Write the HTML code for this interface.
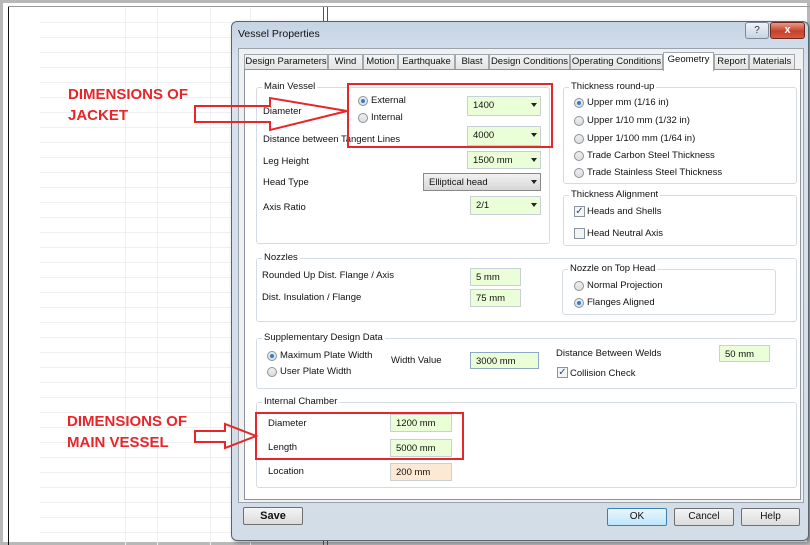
<!DOCTYPE html>
<html><head><meta charset="utf-8"><style>
*{box-sizing:border-box;margin:0;padding:0}
body{width:810px;height:545px;overflow:hidden;background:#fff;font-family:"Liberation Sans",sans-serif;font-size:9.5px;color:#111;position:relative}
.a{position:absolute}
.grp{position:absolute;border:1px solid #d5dbe3;border-radius:3px}
.gl{position:absolute;background:#fff;padding:0 2px;left:5px;top:-7px;white-space:nowrap}
.pan .gl{background:#fff}
.fld{position:absolute;background:#eaffd8;border:1px solid #c9cfd6;height:18px;padding:3px 5px;font-size:9.5px}
.arr{position:absolute;right:3px;top:6px;width:0;height:0;border-left:3.5px solid transparent;border-right:3.5px solid transparent;border-top:4px solid #222}
.rad{position:absolute;width:10px;height:10px;border-radius:50%;border:1px solid #8a949e;background:linear-gradient(#eee,#ddd)}
.rad.on::after{content:"";position:absolute;left:2px;top:2px;width:4px;height:4px;border-radius:50%;background:#2c7fd0}
.chk{position:absolute;width:11px;height:11px;border:1px solid #8a949e;background:#f4f4f4;font-size:10px;line-height:9px;text-align:center;color:#2a4a8a}
.btn{position:absolute;height:18px;border:1px solid #707070;border-radius:2px;background:linear-gradient(#f4f4f4,#dcdcdc);text-align:center;font-size:10px;line-height:16px}
.tab{position:absolute;top:54px;height:16px;border:1px solid #a0a8b2;border-bottom:none;background:linear-gradient(#f4f4f4,#e2e2e2);font-size:9.5px;line-height:14px;text-align:center}
.red{color:#e8262a;font-weight:bold;font-size:15px;position:absolute;white-space:nowrap}
</style></head><body>
<!-- spreadsheet background -->
<div class="a" style="left:0;top:0;width:810px;height:545px;border:3px solid #b8b8b8"></div>
<div class="a" style="left:8px;top:6px;width:1px;height:539px;background:#111"></div>
<div class="a" style="left:8px;top:6px;width:802px;height:1px;background:#999"></div>
<div class="a" style="left:40px;top:8px;width:290px;height:537px;background:repeating-linear-gradient(to bottom,transparent 0,transparent 14px,#eef0f2 14px,#eef0f2 15px)"></div>
<div class="a" style="left:125px;top:8px;width:1px;height:537px;background:#f0f0f0"></div>
<div class="a" style="left:157px;top:8px;width:1px;height:537px;background:#f0f0f0"></div>
<div class="a" style="left:210px;top:8px;width:1px;height:537px;background:#f0f0f0"></div>
<div class="a" style="left:250px;top:8px;width:1px;height:537px;background:#f0f0f0"></div>
<div class="a" style="left:323px;top:7px;width:1px;height:538px;background:#555"></div>
<div class="a" style="left:327px;top:7px;width:1px;height:538px;background:#555"></div>

<!-- dialog -->
<div class="a" style="left:231px;top:21px;width:578px;height:520px;background:linear-gradient(#c5d3e3,#d8e2ee 40px,#d3dde8);border:1px solid #5a6470;border-radius:6px;box-shadow:2px 2px 4px rgba(0,0,0,.35)"></div>
<div class="a" style="left:238px;top:28px;font-size:10.5px">Vessel Properties</div>
<div class="a" style="left:745px;top:22px;width:24px;height:17px;border:1px solid #7a8898;border-radius:3px;background:linear-gradient(#eef3f8,#c8d4e2);font-size:10px;text-align:center;line-height:15px;color:#334">?</div>
<div class="a" style="left:770px;top:22px;width:35px;height:17px;border:1px solid #6a2a20;border-radius:3px;background:linear-gradient(#e99a88,#c7402a 55%,#d75a40);color:#fff;font-weight:bold;font-size:11px;text-align:center;line-height:15px">x</div>
<div class="a" style="left:238px;top:48px;width:566px;height:455px;background:#f0f0f0;border:1px solid #9aa4ae"></div>
<!-- tabs -->
<div class="tab" style="left:244px;width:84px">Design Parameters</div>
<div class="tab" style="left:328px;width:35px">Wind</div>
<div class="tab" style="left:363px;width:35px">Motion</div>
<div class="tab" style="left:398px;width:57px">Earthquake</div>
<div class="tab" style="left:455px;width:34px">Blast</div>
<div class="tab" style="left:489px;width:81px">Design Conditions</div>
<div class="tab" style="left:570px;width:93px">Operating Conditions</div>
<div class="tab" style="left:714px;width:35px">Report</div>
<div class="tab" style="left:749px;width:46px">Materials</div>
<div class="pan a" style="left:244px;top:69px;width:557px;height:431px;background:#fff;border:1px solid #8a949e"></div>
<div class="tab" style="left:663px;top:52px;width:51px;height:19px;background:#fff;z-index:2">Geometry</div>

<!-- Main Vessel -->
<div class="grp" style="left:256px;top:87px;width:294px;height:157px"><span class="gl">Main Vessel</span></div>
<div class="a" style="left:263px;top:106px">Diameter</div>
<div class="rad on" style="left:358px;top:96px"></div><div class="a" style="left:371px;top:95px">External</div>
<div class="rad" style="left:358px;top:113px"></div><div class="a" style="left:371px;top:112px">Internal</div>
<div class="fld" style="left:467px;top:96px;width:74px;height:20px">1400<span class="arr"></span></div>
<div class="a" style="left:263px;top:134px">Distance between Tangent Lines</div>
<div class="fld" style="left:467px;top:126px;width:74px;height:20px">4000<span class="arr"></span></div>
<div class="a" style="left:263px;top:156px">Leg Height</div>
<div class="fld" style="left:467px;top:151px;width:74px;height:18px">1500 mm<span class="arr"></span></div>
<div class="a" style="left:263px;top:177px">Head Type</div>
<div class="fld" style="left:423px;top:173px;width:118px;height:18px;background:linear-gradient(#f2f2f2,#d6d6d6);border-color:#888">Elliptical head<span class="arr"></span></div>
<div class="a" style="left:263px;top:202px">Axis Ratio</div>
<div class="fld" style="left:470px;top:196px;width:71px;height:19px">2/1<span class="arr"></span></div>

<!-- Thickness round-up -->
<div class="grp" style="left:563px;top:87px;width:234px;height:97px"><span class="gl">Thickness round-up</span></div>
<div class="rad on" style="left:574px;top:98px"></div><div class="a" style="left:587px;top:97px">Upper mm (1/16 in)</div>
<div class="rad" style="left:574px;top:116px"></div><div class="a" style="left:587px;top:115px">Upper 1/10 mm (1/32 in)</div>
<div class="rad" style="left:574px;top:134px"></div><div class="a" style="left:587px;top:133px">Upper 1/100 mm (1/64 in)</div>
<div class="rad" style="left:574px;top:151px"></div><div class="a" style="left:587px;top:150px">Trade Carbon Steel Thickness</div>
<div class="rad" style="left:574px;top:168px"></div><div class="a" style="left:587px;top:167px">Trade Stainless Steel Thickness</div>
<div class="grp" style="left:563px;top:195px;width:234px;height:51px"><span class="gl">Thickness Alignment</span></div>
<div class="chk" style="left:574px;top:206px">✓</div><div class="a" style="left:587px;top:206px">Heads and Shells</div>
<div class="chk" style="left:574px;top:228px"></div><div class="a" style="left:587px;top:228px">Head Neutral Axis</div>

<!-- Nozzles -->
<div class="grp" style="left:256px;top:258px;width:541px;height:64px"><span class="gl">Nozzles</span></div>
<div class="a" style="left:262px;top:270px">Rounded Up Dist. Flange / Axis</div>
<div class="a" style="left:262px;top:292px">Dist. Insulation / Flange</div>
<div class="fld" style="left:470px;top:268px;width:51px">5 mm</div>
<div class="fld" style="left:470px;top:289px;width:51px">75 mm</div>
<div class="grp" style="left:562px;top:269px;width:214px;height:46px"><span class="gl">Nozzle on Top Head</span></div>
<div class="rad" style="left:574px;top:281px"></div><div class="a" style="left:587px;top:280px">Normal Projection</div>
<div class="rad on" style="left:574px;top:298px"></div><div class="a" style="left:587px;top:297px">Flanges Aligned</div>

<!-- Supplementary -->
<div class="grp" style="left:256px;top:338px;width:541px;height:51px"><span class="gl">Supplementary Design Data</span></div>
<div class="rad on" style="left:267px;top:351px"></div><div class="a" style="left:280px;top:350px">Maximum Plate Width</div>
<div class="rad" style="left:267px;top:367px"></div><div class="a" style="left:280px;top:366px">User Plate Width</div>
<div class="a" style="left:391px;top:355px">Width Value</div>
<div class="fld" style="left:470px;top:352px;width:69px;height:17px;border-color:#8fa8c8">3000 mm</div>
<div class="a" style="left:556px;top:348px">Distance Between Welds</div>
<div class="fld" style="left:719px;top:345px;width:51px;height:17px">50 mm</div>
<div class="chk" style="left:557px;top:367px">✓</div><div class="a" style="left:570px;top:368px">Collision Check</div>

<!-- Internal chamber -->
<div class="grp" style="left:256px;top:402px;width:541px;height:86px"><span class="gl">Internal Chamber</span></div>
<div class="a" style="left:268px;top:418px">Diameter</div>
<div class="a" style="left:268px;top:442px">Length</div>
<div class="a" style="left:268px;top:466px">Location</div>
<div class="fld" style="left:390px;top:414px;width:62px">1200 mm</div>
<div class="fld" style="left:390px;top:439px;width:62px">5000 mm</div>
<div class="fld" style="left:390px;top:463px;width:62px;background:#fde8d4">200 mm</div>

<!-- buttons -->
<div class="btn" style="left:243px;top:507px;width:60px;font-weight:bold;font-size:11px">Save</div>
<div class="btn" style="left:607px;top:508px;width:60px;border-color:#3c7fb1;background:linear-gradient(#eaf6fd,#bee6fd)">OK</div>
<div class="btn" style="left:674px;top:508px;width:60px">Cancel</div>
<div class="btn" style="left:741px;top:508px;width:59px">Help</div>

<!-- red annotations -->
<div class="a" style="left:347px;top:83px;width:206px;height:65px;border:2px solid #e8262a"></div>
<div class="a" style="left:255px;top:412px;width:209px;height:48px;border:2px solid #e8262a"></div>
<div class="red" style="left:68px;top:86px">DIMENSIONS OF</div>
<div class="red" style="left:68px;top:107px">JACKET</div>
<div class="red" style="left:67px;top:413px">DIMENSIONS OF</div>
<div class="red" style="left:67px;top:434px">MAIN VESSEL</div>
<svg class="a" style="left:0;top:0" width="810" height="545">
<polygon points="195,106 270,106 270,98 347,111 270,130 270,122 195,122" fill="none" stroke="#e8262a" stroke-width="2"/>
<polygon points="195,431 225,431 225,424 256,436 225,448 225,442 195,442" fill="none" stroke="#e8262a" stroke-width="2"/>
</svg>
</body></html>
